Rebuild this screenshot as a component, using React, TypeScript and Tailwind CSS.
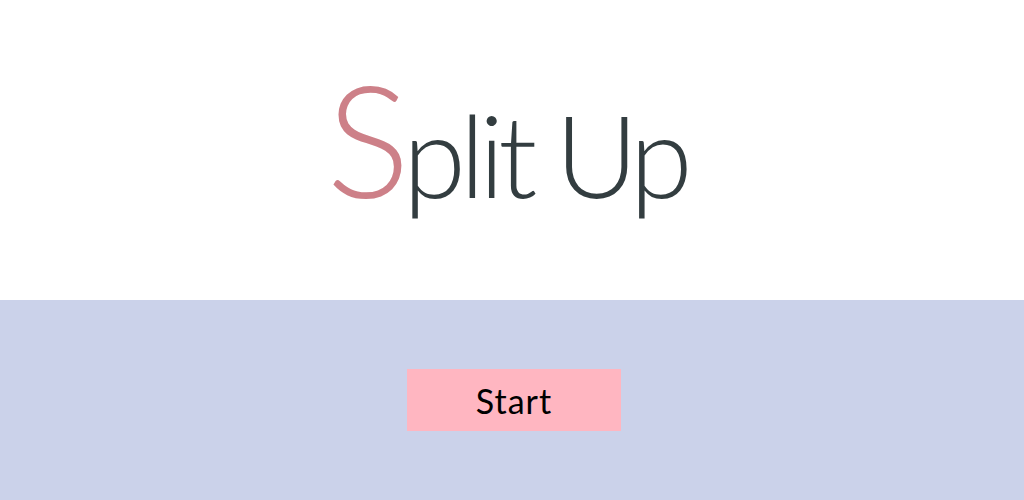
const App = () => {
  return (
    <div className="w-[1024px] h-[500px] flex flex-col font-['Lato',sans-serif]">
      <section className="h-[300px] bg-white flex items-center justify-center">
        <h1 className="flex items-baseline text-[#333d40] font-light leading-none pr-3 pb-6">
          <span className="text-[156px] text-[#cd8088] tracking-[-7px]">S</span>
          <span className="text-[114px] tracking-[-6px]">plit</span>
          <span className="text-[114px] tracking-[-7px] ml-6">Up</span>
        </h1>
      </section>
      <section className="h-[200px] bg-[#cbd2ea] flex items-center justify-center">
        <button className="w-[214px] h-[62px] ml-1 bg-[#ffb6c1] text-black text-[34px] font-normal tracking-[1px]">
          Start
        </button>
      </section>
    </div>
  );
};

export default App;
